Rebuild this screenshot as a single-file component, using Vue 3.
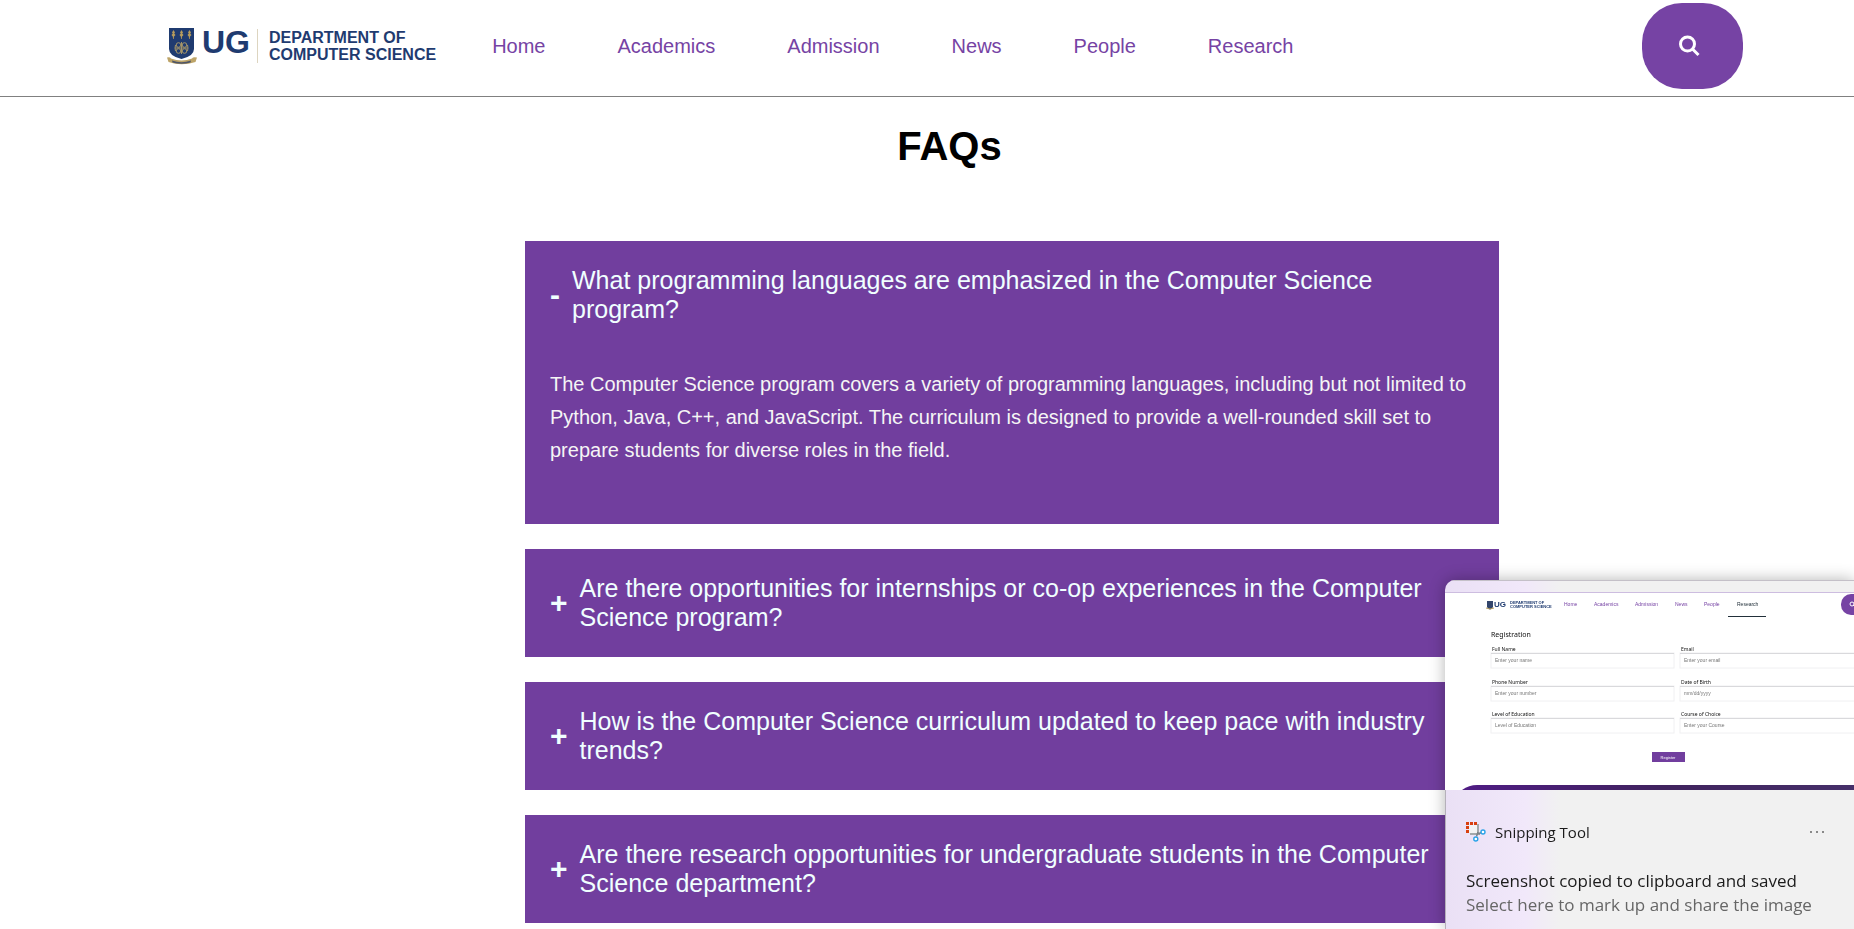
<script setup>
import { ref } from 'vue'

const links = ['Home', 'Academics', 'Admission', 'News', 'People', 'Research']

const faqs = [
  {
    q: 'What programming languages are emphasized in the Computer Science program?',
    a: 'The Computer Science program covers a variety of programming languages, including but not limited to Python, Java, C++, and JavaScript. The curriculum is designed to provide a well-rounded skill set to prepare students for diverse roles in the field.'
  },
  { q: 'Are there opportunities for internships or co-op experiences in the Computer Science program?' },
  { q: 'How is the Computer Science curriculum updated to keep pace with industry trends?' },
  { q: 'Are there research opportunities for undergraduate students in the Computer Science department?' }
]
const open = ref(0)
const toggle = (i) => { open.value = open.value === i ? -1 : i }

const miniLinks = [
  { x: 119, t: 'Home' }, { x: 149, t: 'Academics' }, { x: 190, t: 'Admission' },
  { x: 230, t: 'News' }, { x: 259, t: 'People' }
]
const miniFields = [
  { x: 46, y: 60, label: 'Full Name', hint: 'Enter your name' },
  { x: 235, y: 60, label: 'Email', hint: 'Enter your email' },
  { x: 46, y: 93, label: 'Phone Number', hint: 'Enter your number' },
  { x: 235, y: 93, label: 'Date of Birth', hint: 'mm/dd/yyyy' },
  { x: 46, y: 125, label: 'Level of Education', hint: 'Level of Education' },
  { x: 235, y: 125, label: 'Course of Choice', hint: 'Enter your Course' }
]
</script>

<template>
  <div class="page">
    <header class="bar">
      <a class="logo" href="#">
        <svg class="crest" width="30" height="37" viewBox="0 0 30 37" aria-hidden="true">
          <path d="M2 0H27V21Q27 28 14.500 31Q2 28 2 21Z" fill="#1f3b70" />
          <g fill="#b79c5c">
            <path d="M6.500 2l1.500 2.500-.8 1 1.300 1.500-1.500 1.500-.3 2.500h-.6l-.3-2.500L4.500 7l1.300-1.500-.8-1z" />
            <path d="M14.500 2l1.500 2.500-.8 1 1.300 1.500-1.500 1.500-.3 2.500h-.6l-.3-2.500L12.500 7l1.300-1.500-.8-1z" />
            <path d="M22.500 2l1.500 2.500-.8 1 1.300 1.500-1.500 1.500-.3 2.500h-.6l-.3-2.500L20.500 7l1.300-1.500-.8-1z" />
          </g>
          <g fill="none" stroke="#a39468" stroke-width="1">
            <circle cx="11.500" cy="17" r="2.300" /><circle cx="17.500" cy="17" r="2.300" />
            <circle cx="11.500" cy="23" r="2.300" /><circle cx="17.500" cy="23" r="2.300" />
            <path d="M14.500 14v12M8 20h13M8.500 17q-1 3 0 6M20.500 17q1 3 0 6" />
          </g>
          <path d="M0 29.500Q3 28.500 4 30.500Q14.500 34.500 25 30.500Q26 28.500 30 29.500L28.500 34Q14.500 38.500 1.500 34Z" fill="#bda468" />
          <path d="M5 32.500Q14.500 36 24 32.500L23.500 34.500Q14.500 37 5.500 34.500Z" fill="#4d5568" />
        </svg>
        <span class="ug">UG</span>
        <span class="dept">DEPARTMENT OF<br />COMPUTER SCIENCE</span>
      </a>
      <nav class="nav">
        <a v-for="l in links" :key="l" href="#">{{ l }}</a>
      </nav>
      <button class="search" type="button" aria-label="Search">
        <svg width="22" height="22" viewBox="0 0 22 22" fill="none" stroke="#fff" stroke-width="3" aria-hidden="true">
          <circle cx="9.500" cy="9" r="7" />
          <path d="M14.500 14L20.500 20" />
        </svg>
      </button>
    </header>

    <main>
      <h1>FAQs</h1>
      <section class="list">
        <article v-for="(f, i) in faqs" :key="i" class="card">
          <button class="question" type="button" :aria-expanded="open === i" @click="toggle(i)">
            <span class="sign">{{ open === i ? '-' : '+' }}</span>
            <span>{{ f.q }}</span>
          </button>
          <p v-if="f.a && open === i" class="answer">{{ f.a }}</p>
        </article>
      </section>
    </main>

    <aside class="toast">
      <div class="strip"></div>
      <svg class="thumb" height="197" role="img" aria-label="Registration page preview">
        <path d="M42 8h6v6q-1 2-3 2.500q-2-.5-3-2.500z" fill="#33456b" />
        <path d="M41 15q4 2 8 0" stroke="#b79c5c" fill="none" />
        <text x="49" y="14" class="m-ug">UG</text>
        <text x="65" y="11" class="m-dept">DEPARTMENT OF</text>
        <text x="65" y="15" class="m-dept">COMPUTER SCIENCE</text>
        <text v-for="l in miniLinks" :key="l.t" :x="l.x" y="13" class="m-link">{{ l.t }}</text>
        <text x="292" y="13" class="m-link active">Research</text>
        <rect x="283" y="23" width="38" height="1" fill="#22303a" />
        <rect x="396" y="1" width="25" height="21" rx="10" fill="#7643a4" />
        <circle cx="407" cy="11" r="2" fill="none" stroke="#fff" />
        <path d="M408 12l2 2" stroke="#fff" />
        <text x="46" y="44" class="m-title">Registration</text>
        <g v-for="f in miniFields" :key="f.label">
          <text :x="f.x + 1" :y="f.y - 2" class="m-label">{{ f.label }}</text>
          <rect :x="f.x" :y="f.y" width="183" height="15" fill="#fff" stroke="#f0f0f2" />
          <rect :x="f.x" :y="f.y" width="183" height="1" fill="#d9d9dc" />
          <text :x="f.x + 4" :y="f.y + 9" class="m-hint">{{ f.hint }}</text>
        </g>
        <rect x="207" y="159" width="33" height="10" fill="#713e9e" />
        <text x="223" y="166" class="m-btn">Register</text>
        <defs>
          <linearGradient id="band"><stop offset="0" stop-color="#4f1c84" /><stop offset="0.500" stop-color="#40235e" /><stop offset="1" stop-color="#46306a" /></linearGradient>
        </defs>
        <path d="M17 197Q24 192 32 192H420V197Z" fill="url(#band)" />
      </svg>
      <div class="info">
        <div class="app">
          <svg width="20" height="20" viewBox="0 0 20 20" aria-hidden="true">
            <path d="M3 3H12L14 12L3 11Z" fill="#f3f3f3" />
            <path d="M0 0h3v3H0zM4 0h3v3H4zM8 0h3v3H8zM0 4h3v3H0zM0 8h3v3H0z" fill="#d8400f" />
            <path d="M4 12H14M12 2V12" stroke="#a3a8aa" stroke-width="2" fill="none" />
            <path d="M12 10L10.500 14.500M12.500 12L15 10.500" stroke="#7c8286" stroke-width="1.500" />
            <circle cx="9.800" cy="17" r="2" fill="#fff" stroke="#2aa3e8" stroke-width="1.400" />
            <circle cx="17" cy="10" r="2" fill="#fff" stroke="#2aa3e8" stroke-width="1.400" />
          </svg>
          <span>Snipping Tool</span>
          <button class="more" type="button" aria-label="More options"><i></i><i></i><i></i></button>
        </div>
        <p class="msg">Screenshot copied to clipboard and saved</p>
        <p class="sub">Select here to mark up and share the image</p>
      </div>
    </aside>
  </div>
</template>

<style>
body { background: #fff; }
</style>

<style scoped>
.page { font-family: "Liberation Sans", Arial, sans-serif; }
button { font: inherit; border: 0; cursor: pointer; }
a { text-decoration: none; }

.bar {
  display: flex;
  align-items: center;
  padding: 3px 111px 7px 166px;
  border-bottom: 1px solid #808080;
}
.logo { display: flex; align-items: center; color: #1f3b70; font-weight: bold; }
.crest { margin-left: 1px; }
.ug { margin: 0 7px 8px 5px; font-size: 32px; line-height: 32px; }
.dept {
  padding-left: 11px;
  border-left: 1px solid #ddd5c0;
  font-size: 16px;
  line-height: 17px;
  white-space: nowrap;
}
.nav { display: flex; gap: 72px; margin-left: 56px; }
.nav a { color: #7643a4; font-size: 20px; line-height: 24px; }
.search {
  display: grid;
  place-items: center;
  width: 101px;
  height: 86px;
  margin-left: auto;
  padding: 0 8px 0 0;
  border-radius: 40px;
  background: #7643a4;
}

h1 {
  margin: 26px 0 72px;
  padding-left: 45px;
  text-align: center;
  font-size: 40px;
  line-height: 46px;
  color: #000;
}
.list { display: grid; gap: 25px; padding: 0 355px 0 525px; }
.card { padding: 25px; background: #713e9e; }
.question {
  display: flex;
  align-items: center;
  gap: 12px;
  width: 100%;
  padding: 0;
  background: none;
  color: #f0ffff;
  font-size: 25px;
  line-height: 29px;
  text-align: left;
}
.sign { padding-bottom: 2px; font-size: 30px; font-weight: bold; }
.answer { margin: 44px 0 32px; color: #f5f5f5; font-size: 20px; line-height: 33px; }

.toast {
  position: fixed;
  right: 0;
  bottom: 0;
  width: 409px;
  overflow: hidden;
  border-radius: 10px 0 0 0;
  background: linear-gradient(90deg, #eae0f5 0, #f1e8fa 80px, #f1f1f1 115px);
  box-shadow: 0 0 16px rgba(0, 0, 0, 0.3);
}
.strip { height: 13px; border-top: 1px solid #c4c0c8; border-bottom: 1px solid #cdbde0; box-sizing: border-box; }
.thumb { display: block; width: 100%; background: #fff; }
.m-ug { font: bold 8px "Liberation Sans", sans-serif; fill: #1f3b70; }
.m-dept { font: bold 4px "Liberation Sans", sans-serif; fill: #1f3b70; }
.m-link { font: 5px "Liberation Sans", sans-serif; fill: #7643a4; }
.m-link.active { fill: #22303a; }
.m-title { font: 7px "Noto Sans", sans-serif; fill: #111; }
.m-label { font: 5px "Noto Sans", sans-serif; fill: #111; }
.m-hint { font: 5px "Liberation Sans", sans-serif; fill: #777; }
.m-btn { font: 4px "Liberation Sans", sans-serif; fill: #fff; text-anchor: middle; }

.info {
  padding: 30px 28px 12px 20px;
  border-left: 1px solid #b5b0ba;
  font-family: "Open Sans", "Noto Sans", sans-serif;
  color: #1b1b1b;
}
.app { display: flex; align-items: center; gap: 9px; font-size: 15px; line-height: 24px; }
.more { display: flex; gap: 4px; margin-left: auto; padding: 8px 2px; background: none; }
.more i { width: 2px; height: 2px; border-radius: 1px; background: #666; }
.msg, .sub { margin: 0; font-size: 17px; line-height: 24px; white-space: nowrap; }
.msg { margin-top: 25px; }
.sub { color: #666; }
</style>
